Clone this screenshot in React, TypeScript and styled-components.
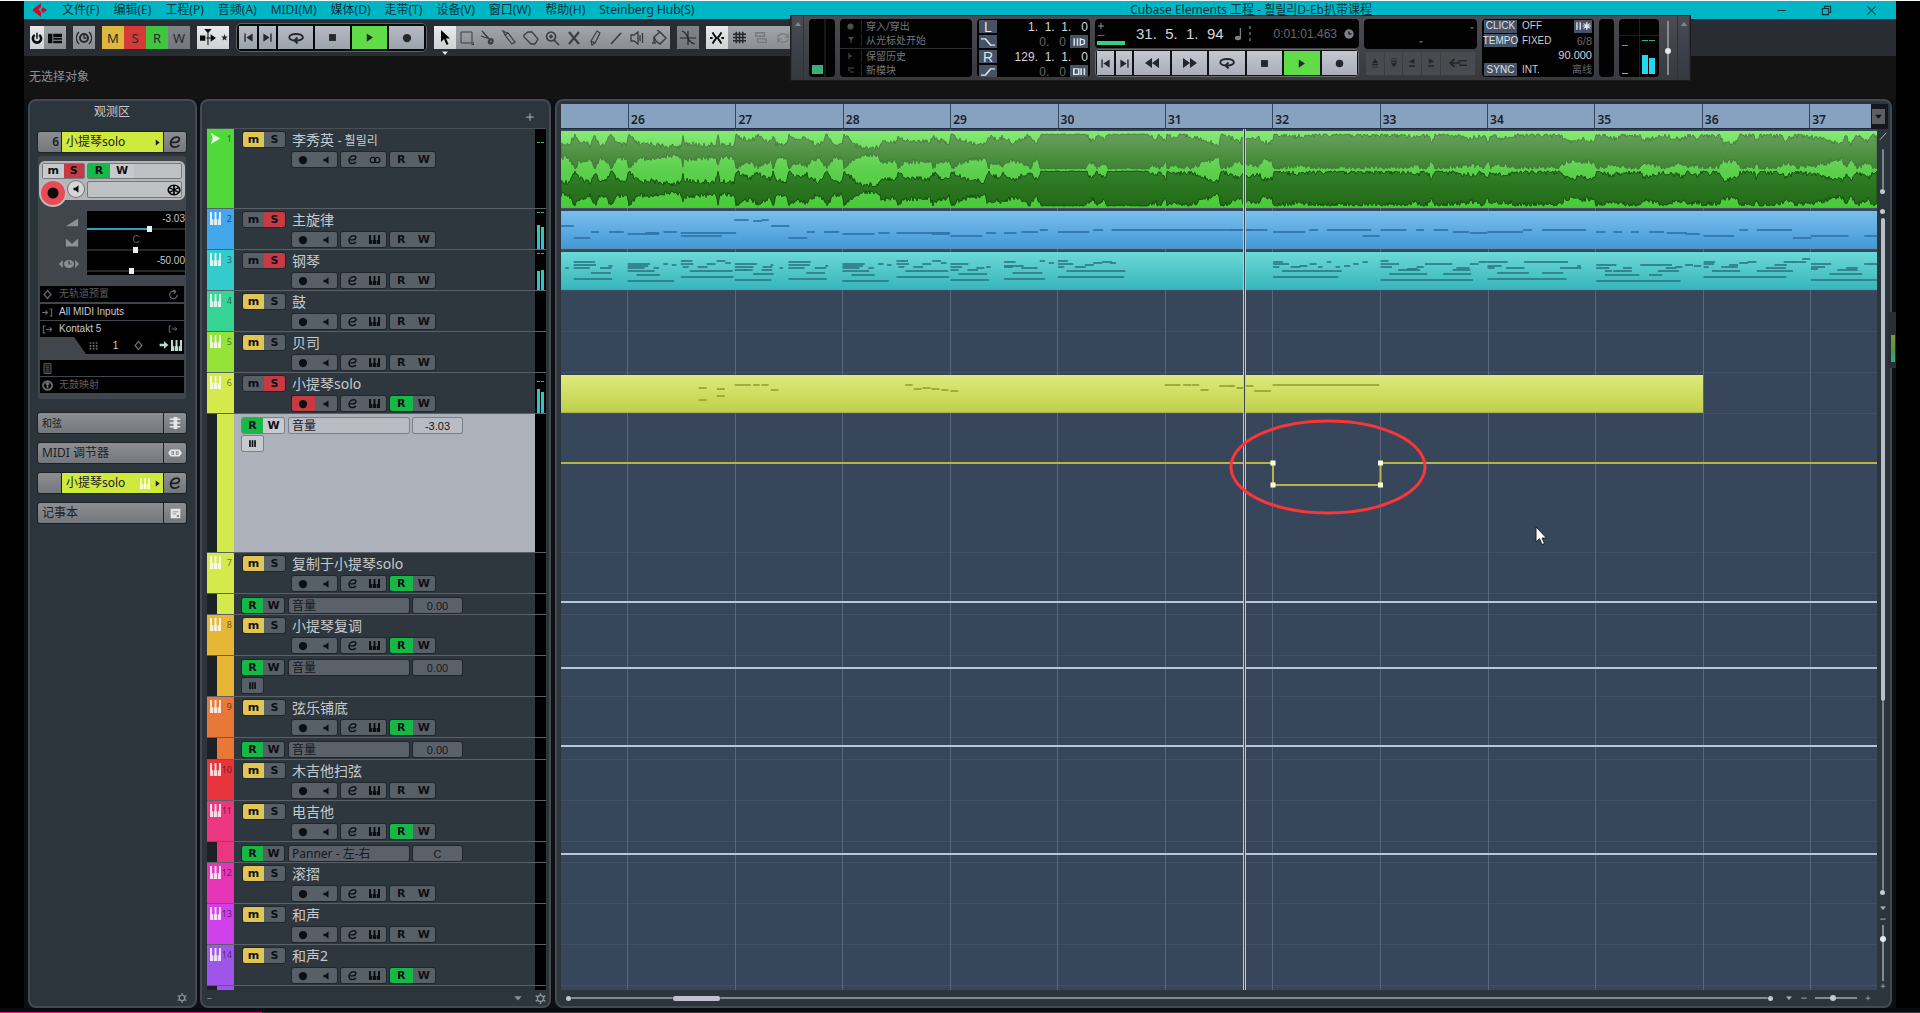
import React from "react";
import styled, { createGlobalStyle, css } from "styled-components";

const uiFont = `"Noto Sans", "Noto Sans CJK SC", "Noto Sans CJK KR", sans-serif`;
const smallFont = `"Liberation Sans", "Noto Sans CJK SC", sans-serif`;
const capFont = `"DejaVu Sans", sans-serif`;

const Global = createGlobalStyle`
  * { box-sizing: border-box; }
  body { margin: 0; background: #000; font-family: ${uiFont}; overflow: hidden; }
  button, input { font: inherit; margin: 0; padding: 0; border: 0; color: inherit; background: none; }
  svg { display: block; flex: none; }
`;

/* ---------- icons ---------- */

const paths: Record<string, React.ReactNode> = {
  power: <><path d="M5 4a5.500 5.500 0 1 0 6 0" fill="none" stroke="currentColor" strokeWidth="3.500" /><path d="M8 1v8" stroke="currentColor" strokeWidth="2" /></>,
  layout: <path d="M0 3h5v11H0zM6 3h10v4H6zM6 8h10v2H6zM6 11h10v3H6z" />,
  constrain: <><circle cx="8" cy="8" r="4" fill="none" stroke="currentColor" strokeWidth="2" /><path d="M8 5v3h2.500M3 2a8 8 0 0 0 0 12M13 2a8 8 0 0 1 0 12" fill="none" stroke="currentColor" strokeWidth="1.300" /></>,
  follow: <path d="M0 6h5v5H0zM6 8h4V5l5 3.500-5 3.500V9H6zM4 0h7L7.500 4zM7 3h1v12H7z" />,
  star: <path d="M8 3l1.300 3.400 3.700.2-2.900 2.300 1 3.600L8 10.500l-3.100 2 1-3.600L3 6.600l3.700-.2z" />,
  prev: <path d="M2 2h2v12H2zM14 2v12L5 8z" />,
  next: <path d="M12 2h2v12h-2zM2 2v12l9-6z" />,
  rew: <path d="M8 3v10L1 8zM15 3v10L8 8z" />,
  fwd: <path d="M1 3v10l7-5zM8 3v10l7-5z" />,
  cycle: <path d="M6 10.500C-1 9.500 0 4 8 4s9.500 5.500 2 6.500H7M9.500 7.500L6.500 10.500l3 3" fill="none" stroke="currentColor" strokeWidth="1.800" />,
  stop: <path d="M3 3h10v10H3z" />,
  play: <path d="M4 2v12l9-6z" />,
  rec: <circle cx="8" cy="8" r="5.500" />,
  pointer: <path d="M4 0v12l3-3 2.500 6 2-1-2.500-5.500h4z" />,
  range: <><path d="M2 2h11v11H2z" fill="none" stroke="currentColor" strokeWidth="1" /><path d="M15 12v3h-3z" /></>,
  split: <path d="M2 1l8 9M1 6l9 3M10 9a2 2 0 1 0 3 1 2 2 0 0 0-3-1M10 10a2 2 0 1 0 1 4 2 2 0 0 0-1-4" fill="none" stroke="currentColor" strokeWidth="1.300" />,
  glue: <path d="M2 1l2 4 7 9 3-2-7-9-3-1zM4 5l3-2" fill="none" stroke="currentColor" strokeWidth="1.200" />,
  erase: <path d="M1 5l4-3h4l6 7-3 5H8L1 7z" fill="none" stroke="currentColor" strokeWidth="1.300" />,
  zoom: <path d="M7 2a4.500 4.500 0 1 0 .1 0M10 10l5 5M7 4.500v4M5 6.500h4" fill="none" stroke="currentColor" strokeWidth="1.600" />,
  mute: <path d="M3 2l10 12M13 2L3 14" fill="none" stroke="currentColor" strokeWidth="2" />,
  pencil: <path d="M5 15l-1-4 6-10 3 2-5 10zM4 11l4 2" fill="none" stroke="currentColor" strokeWidth="1.200" />,
  line: <path d="M3 14L13 3" fill="none" stroke="currentColor" strokeWidth="1.600" />,
  speaker: <path d="M1 5h3l4-3v12l-4-3H1zM10 5v6M12.500 3v10" fill="none" stroke="currentColor" strokeWidth="1.300" />,
  bucket: <path d="M3 7l6-5 6 6-6 6-4-3zM3 7v6M9 2L6 0M1 13h4" fill="none" stroke="currentColor" strokeWidth="1.500" />,
  xfade: <path d="M8 1v14M0 8h16M2 1c3 1 5 4 6 7s3 5 7 6" fill="none" stroke="currentColor" strokeWidth="1.200" />,
  snap: <path d="M3 1.500C5 6 7 7 7 8s-2 2-4 6.500M13 1.500C11 6 9 7 9 8s2 2 4 6.500M0 8h3M13 8h3" fill="none" stroke="currentColor" strokeWidth="2.200" />,
  grid: <path d="M4 1v14M8 1v14M12 1v14M0 4h16M0 8h16M0 12h16" fill="none" stroke="currentColor" strokeWidth="1.800" />,
  gridtype: <path d="M2 2h10v4H2zM4 9h10v4H4z" fill="none" stroke="currentColor" strokeWidth="1.500" />,
  quant: <path d="M2 7c1-5 10-5 12 0M14 9c-1 5-10 5-12 0M14 3v4h-4M2 13V9h4" fill="none" stroke="currentColor" strokeWidth="1.500" />,
  mon: <path d="M4 6h3l5-4v12L7 10H4z" />,
  edit: <path d="M2 8.500h6c5.500 0 7-6 2-6C5.500 2.500 3 6 3 9.500c0 5.500 6.500 5.500 10 2" fill="none" stroke="currentColor" strokeWidth="2" />,
  stereo: <path d="M5 4.500a3.500 3.500 0 1 0 .1 0M11 4.500a3.500 3.500 0 1 0 .1 0" fill="none" stroke="currentColor" strokeWidth="1.600" />,
  keys: <path d="M0 0h3v9h1.600v7H0zM6.600 0h2.800v9h1v7H5.600V9h1zM13 0h3v16h-4.600V9H13z" />,
  audio: <path d="M1 1l14 7L1 15l3-7z" />,
  bars: <path d="M2 2h3v12H2zM6.500 2h3v12h-3zM11 2h3v12h-3z" />,
  gear: <path d="M8 3.500a4.500 4.500 0 1 0 .1 0M8 0v3M8 13v3M1 4l2.600 1.500M12.400 10.500L15 12M1 12l2.600-1.500M12.400 5.500L15 4" fill="none" stroke="currentColor" strokeWidth="2.200" />,
  wheel: <path d="M8 1.500a6.500 6.500 0 1 0 .1 0M8 2v12M3 5l10 6M3 11l10-6" fill="none" stroke="currentColor" strokeWidth="1.900" />,
  plus: <path d="M7 2h2v5h5v2H9v5H7V9H2V7h5z" />,
  minus: <path d="M1 7h14v2.500H1z" />,
  down: <path d="M2 5h12l-6 7z" />,
  up: <path d="M2 12h12L8 4z" />,
  right: <path d="M4 1v14l9-7z" />,
  volume: <path d="M1 14L15 5v9z" />,
  pan: <path d="M1 4l7 6 7-6v9H1z" />,
  delay: <><circle cx="8" cy="8" r="4" /><path d="M3 4v8L0 8zM13 4v8l3-4z" /><path d="M8 5v3h2" fill="none" stroke="#3f454b" /></>,
  diamond: <path d="M8 2l5 6-5 6-5-6z" fill="none" stroke="currentColor" strokeWidth="1.800" />,
  reload: <path d="M10 3.500a5.500 5.500 0 1 0 3.500 5M8 1l3 2.500L8.500 7" fill="none" stroke="currentColor" strokeWidth="1.600" />,
  input: <path d="M0 8h8M5 5l3 3-3 3M11 3h3v10h-3" fill="none" stroke="currentColor" strokeWidth="1.500" />,
  output: <path d="M5 3H2v10h3M6 8h8M11 5l3 3-3 3" fill="none" stroke="currentColor" strokeWidth="1.500" />,
  dots: <path d="M1 2h3v3H1zM6.500 2h3v3h-3zM12 2h3v3h-3zM1 7h3v3H1zM6.500 7h3v3h-3zM12 7h3v3h-3zM1 12h3v3H1zM6.500 12h3v3h-3zM12 12h3v3h-3z" />,
  arrow: <path d="M1 6h7V2l7 6-7 6v-4H1z" />,
  sheet: <path d="M3 1h10v14H3zM5 4h6M5 7h6M5 10h6M5 13h6" fill="none" stroke="currentColor" strokeWidth="1.300" />,
  drum: <path d="M8 1.500a6.500 6.500 0 1 0 .1 0M8 4v8M5.500 6.500L8 4l2.500 2.500" fill="none" stroke="currentColor" strokeWidth="2.500" />,
  chord: <path d="M6 0h5v16H6zM1 2h14v2H1zM1 7h14v2H1zM1 12h14v2H1z" />,
  midi: <path d="M0 8l3-4h10l3 4-3 4H3zM4 6v4h3V6zM9 6v4h3V6zM5 7h1v2H5zM10 7h1v2h-1z" fillRule="evenodd" />,
  note: <path d="M1 1h14v14H1zM4 5v1h8V5zM4 8v1h5V8zM10 11v2h3v-3h-2z" fillRule="evenodd" />,
  tee: <path d="M2 2h12L9 8v6H7V8z" />,
  flag: <path d="M3 2h2v4l7 2-7 2v4H3z" />,
  lanes: <path d="M2 3h12v2H2zM2 7h5v2H2zM6 11h8v2H6z" />,
  curveDown: <path d="M0 3h5l6 10h5" fill="none" stroke="currentColor" strokeWidth="2" />,
  curveUp: <path d="M0 13h5l6-10h5" fill="none" stroke="currentColor" strokeWidth="2" />,
  preroll: <path d="M1.500 2v12M5.500 2v12M9 3l5 2v6l-5 2z" fill="none" stroke="currentColor" strokeWidth="1.800" />,
  postroll: <path d="M1 3h6v10H1zM10 2v12M14 2v12" fill="none" stroke="currentColor" strokeWidth="2" />,
  quarter: <><path d="M10 1h1.500v11H10z" /><ellipse cx="8" cy="12.500" rx="3.500" ry="2.500" /></>,
  swing: <path d="M7 0h2v3H7zM7 6h2v3H7zM7 12h2v3H7z" />,
  clock: <><circle cx="8" cy="8" r="7.500" /><path d="M8 4v4h4" fill="none" stroke="#000" strokeWidth="1.800" /></>,
  ins: <path d="M8 2l4 6H4zM4 9h8v2H4zM4 13h8v1H4z" />,
  del: <path d="M8 14l4-6H4zM4 5h8v2H4zM4 2h8v1H4z" />,
  nudgeL: <path d="M11 2v7L4 6zM4 11h8v2H4z" />,
  nudgeR: <path d="M5 2v7l7-3zM4 11h8v2H4z" />,
  loopback: <path d="M5 3L1 8l4 5M1 8h9M8 5h8M9 11h7" fill="none" stroke="currentColor" strokeWidth="1.800" />,
  metro: <path d="M1 2v12M4.500 2v12M11.500 2v12M7 8h9M8 4l7 8M15 4l-7 8" fill="none" stroke="currentColor" strokeWidth="1.500" />,
  winMin: <path d="M2 8h12" stroke="currentColor" strokeWidth="1.500" />,
  winMax: <path d="M2 5h9v9H2zM5 5V2h9v9h-3" fill="none" stroke="currentColor" strokeWidth="1.500" />,
  winClose: <path d="M2 2l12 12M14 2L2 14" stroke="currentColor" strokeWidth="1.500" />,
  logo: <path d="M1 7l8-6v4L7 7v1l2 2v5L1 9zM11 5l4 3-4 3-2-3z" />,
};

const Icon = ({ name, size = 12, w }: { name: string; size?: number; w?: number }) => (
  <svg width={w ?? size} height={size} viewBox="0 0 16 16" fill="currentColor" preserveAspectRatio={w ? "none" : "xMidYMid meet"} aria-hidden>
    {paths[name]}
  </svg>
);

/* ---------- frame ---------- */

const Page = styled.div`
  min-height: 100vh;
  display: flex;
  flex-direction: column;
  background: #000;
  border-top: 1px solid #f4fbfc;
`;
const Frame = styled.div`
  flex: 1;
  margin: 0 24px;
  position: relative;
  display: flex;
  flex-direction: column;
  background: #0c0f14;
`;
const MenuBar = styled.header`
  height: 18px;
  display: flex;
  align-items: center;
  background: #00b6c4;
  color: #07343c;
  font-size: 12px;
  line-height: 16px;
`;
const Logo = styled.span`
  color: #c8102e;
  padding: 0 7px 0 8px;
`;
const Menu = styled.nav`
  display: flex;
  flex: 1;
`;
const MenuItem = styled.button`
  padding: 0 7px;
  white-space: nowrap;
`;
const WinTitle = styled.div`
  white-space: nowrap;
`;
const WinButtons = styled.div`
  flex: 1;
  max-width: 524px;
  display: flex;
  justify-content: flex-end;
  gap: 34px;
  padding-right: 19px;
`;

/* ---------- toolbar ---------- */

const Toolbar = styled.div`
  height: 37px;
  display: flex;
  align-items: center;
  gap: 7px;
  padding: 0 6px;
  background: #2a2c33;
`;
const Group = styled.div<{ $framed?: boolean }>`
  display: flex;
  height: 23px;
  flex: none;
  ${(p) => p.$framed && css`
    height: 29px;
    gap: 2px;
    padding: 2px;
    border: 1px solid #5e6166;
    border-radius: 5px;
    background: #07080a;
  `}
`;
const tones: Record<string, string> = {
  plain: "linear-gradient(#a2a5aa, #8a8d92)",
  light: "linear-gradient(#e8eaec, #cfd1d4)",
  dark: "linear-gradient(#808388, #74777c)",
  steel: "linear-gradient(#b5bac4, #9da3ad)",
  pale: "linear-gradient(#c3c7d0, #a9aeb8)",
  go: "#5fdc48",
  yellow: "#dcb93c",
  red: "#d63a38",
  green: "#3fc63c",
  off: "#4a4b50",
};
const ToolButton = styled.button<{ $w?: number; $tone?: string; $ink?: string }>`
  width: ${(p) => p.$w ?? 22}px;
  height: 100%;
  display: flex;
  align-items: center;
  justify-content: center;
  background: ${(p) => tones[p.$tone ?? "plain"]};
  color: ${(p) => p.$ink ?? "#26282c"};
  font-size: 13px;
`;
const Tools = styled.div`
  display: grid;
  grid-template-columns: 22px repeat(10, minmax(0, 1fr));
  width: 236px;
  height: 23px;
  position: relative;
  & > button { width: auto; }
`;
const ToolHint = styled.span`
  position: absolute;
  left: 7px;
  top: 23px;
  color: #e6e8ea;
`;
const StatusLine = styled.div`
  height: 43px;
  display: flex;
  align-items: center;
  padding: 0 5px 4px;
  background: #131313;
  color: #8c8f93;
  font-size: 12px;
`;

/* ---------- transport ---------- */

const Transport = styled.section`
  position: absolute;
  left: 766px;
  top: 14px;
  height: 66px;
  display: flex;
  gap: 5px;
  padding: 3px 0;
  background: linear-gradient(#4a4c51, #37393d);
  border: 1px solid #1c1d20;
  color: #c9cbcf;
`;
const Grip = styled.div`
  width: 13px;
  color: #85888e;
  display: flex;
  justify-content: center;
  padding-top: 4px;
  background: linear-gradient(#4a4c51, #3b3f4b 60%, #37393d);
  border: 1px solid #303236;
  border-width: 0 1px;
  margin: -3px 0;
`;
const Screen = styled.div<{ $w: number }>`
  width: ${(p) => p.$w}px;
  background: #020203;
  border-radius: 4px;
  overflow: hidden;
  display: flex;
  flex-direction: column;
`;
const LoadMeter = styled(Screen)`
  justify-content: flex-end;
  padding: 3px;
  background: linear-gradient(90deg, #020203 15px, #17181b 15px, #17181b 17px, #020203 17px);
`;
const Load = styled.span`
  width: 11px;
  height: 9px;
  background: #3aae74;
`;
const ModeRow = styled.button<{ $gap?: boolean }>`
  flex: 1;
  display: grid;
  grid-template-columns: 21px 1fr;
  align-items: center;
  justify-items: center;
  color: #74767a;
  font-size: 10px;
  line-height: 12px;
  border-bottom: ${(p) => (p.$gap ? "1px solid #2b2c2e" : 0)};
  & > svg { color: #4d4f53; }
  & > span { justify-self: stretch; text-align: left; padding-left: 4px; border-left: 1px solid #232427; }
`;
const LocRow = styled.div`
  flex: 1;
  display: flex;
  align-items: center;
  gap: 4px;
  padding: 1px 2px;
  font-family: ${smallFont};
  font-size: 12px;
  line-height: 12px;
`;
const Key = styled.button<{ $w?: number }>`
  width: ${(p) => p.$w ?? 18}px;
  height: 13px;
  display: flex;
  align-items: center;
  justify-content: center;
  background: #465266;
  color: #dfe3ea;
  font-family: ${smallFont};
  font-size: ${(p) => (p.$w ? 10 : 14)}px;
  line-height: 12px;
`;
const Digits = styled.span<{ $dim?: boolean; $size?: number }>`
  white-space: pre;
  color: ${(p) => (p.$dim ? "#66686c" : "#d4d5d8")};
  font-family: ${smallFont};
  font-size: ${(p) => p.$size ?? 12}px;
`;
const Push = styled.span`
  flex: 1;
`;
const Stack = styled.div<{ $w: number }>`
  width: ${(p) => p.$w}px;
  display: flex;
  flex-direction: column;
  gap: 1px;
`;
const TimeScreen = styled(Screen)`
  height: 30px;
  width: 100%;
  flex-direction: row;
  align-items: center;
  padding: 0 5px 0 2px;
  gap: 7px;
`;
const Jog = styled.div`
  width: 28px;
  margin-right: 4px;
  display: flex;
  flex-direction: column;
  gap: 3px;
  color: #8d9095;
`;
const JogBar = styled.span`
  height: 4px;
  background: #35cf8b;
`;
const NoteMarks = styled.span`
  display: flex;
  align-items: center;
  color: #7d8084;
`;
const Deck = styled.div<{ $quiet?: boolean }>`
  height: 28px;
  display: flex;
  gap: ${(p) => (p.$quiet ? 1 : 2)}px;
  padding: 1px;
  border-radius: 4px;
  border: 1px solid ${(p) => (p.$quiet ? "transparent" : "#6a6c70")};
  background: ${(p) => (p.$quiet ? "transparent" : "#111214")};
`;
const DeckButton = styled.button<{ $grow: number; $tone: string }>`
  flex: ${(p) => p.$grow} 1 0;
  display: flex;
  align-items: center;
  justify-content: center;
  background: ${(p) => tones[p.$tone]};
  color: ${(p) => (p.$tone === "off" ? "#25262a" : "#23272d")};
`;
const MarkerScreen = styled(Screen)`
  width: 100%;
  height: 30px;
  align-items: center;
  justify-content: space-between;
  color: #55585c;
  padding: 6px 2px 4px;
`;
const MarkerRow = styled.div`
  width: 100%;
  display: flex;
  justify-content: flex-end;
`;
const TempoRow = styled.div`
  flex: 1;
  display: flex;
  align-items: center;
  gap: 5px;
  padding: 0 2px;
  font-family: ${smallFont};
  font-size: 10px;
  line-height: 12px;
`;
const OutMeter = styled(Screen)`
  flex-direction: row;
  align-items: flex-end;
  gap: 1px;
  padding: 0 4px 3px 3px;
  background:
    linear-gradient(#1c1e20, #1c1e20) 0 16px / 100% 1px no-repeat,
    linear-gradient(90deg, #020203 20px, #1c1e20 20px, #1c1e20 21px, #020203 21px);
`;
const MeterCol = styled.span<{ $w: number; $top: number }>`
  width: ${(p) => p.$w}px;
  height: 100%;
  padding-top: ${(p) => p.$top}px;
  display: flex;
  flex-direction: column;
  justify-content: space-between;
`;
const Peak = styled.i<{ $warm?: boolean }>`
  height: 1px;
  background: ${(p) => (p.$warm ? "#b5792c" : "#36b87c")};
`;
const Level = styled.i<{ $h: number; $bright?: boolean }>`
  height: ${(p) => p.$h}px;
  background: ${(p) => (p.$bright ? "#1fd8ee" : "linear-gradient(#2ad0ac, #22c4dc)")};
`;
const VRange = styled.input.attrs({ type: "range" })<{ $h: number }>`
  writing-mode: vertical-lr;
  appearance: none;
  width: 8px;
  height: ${(p) => p.$h}px;
  align-self: center;
  background: linear-gradient(90deg, transparent 3px, #868b93 3px, #868b93 5px, transparent 5px);
  &::-webkit-slider-thumb {
    appearance: none;
    width: 6px;
    height: 6px;
    border-radius: 50%;
    background: #e6e9ee;
  }
`;

/* ---------- panels ---------- */

const Work = styled.main`
  flex: 1;
  display: flex;
  align-items: stretch;
  padding: 0 4px;
`;
const Panel = styled.section`
  display: flex;
  flex-direction: column;
  border: 2px solid #434a52;
  border-radius: 8px;
  background: #2d353c;
`;
const Inspector = styled(Panel)`
  width: 169px;
  margin-right: 3px;
  padding: 0 8px 0 7px;
`;
const PanelTitle = styled.h2`
  margin: 0;
  height: 30px;
  padding-top: 3px;
  text-align: center;
  font-size: 12px;
  line-height: 16px;
  font-weight: 400;
  color: #c3c7cb;
`;
const Section = styled.div<{ $gap?: number }>`
  height: 22px;
  margin-bottom: ${(p) => p.$gap ?? 8}px;
  display: flex;
  gap: 1px;
  flex: none;
  border: 1px solid #1d2227;
  border-radius: 3px;
  overflow: hidden;
  background: #1d2227;
  color: #1c2024;
  font-size: 12px;
  line-height: 16px;
`;
const SectionPart = styled.button<{ $w?: number; $lime?: boolean; $size?: number; $light?: boolean; $end?: boolean }>`
  ${(p) => (p.$w ? `width: ${p.$w}px;` : "flex: 1;")}
  display: flex;
  align-items: center;
  justify-content: ${(p) => (p.$end ? "flex-end" : p.$w ? "center" : "flex-start")};
  gap: 4px;
  padding: ${(p) => (p.$end ? "0 2px" : p.$w ? "0" : "0 2px 0 4px")};
  font-size: ${(p) => p.$size ?? 12}px;
  font-weight: ${(p) => (p.$end ? 600 : 400)};
  background: ${(p) => (p.$lime ? "#cfe93d" : "linear-gradient(#8b8f94, #74787d)")};
  color: ${(p) => (p.$light ? "#e4e6e8" : "#1c2024")};
`;
const Lime = styled.span`
  display: flex;
  color: #f6ffd0;
`;
const Card = styled.div`
  margin: 3px 1px 13px;
  padding: 5px 1px 5px;
  border-radius: 3px;
  background: #40464b;
  display: flex;
  flex-direction: column;
`;
const Controls = styled.div`
  height: 39px;
  margin-bottom: 11px;
  padding: 2px 3px;
  border-radius: 6px 6px 6px 12px;
  background: #b4b7ba;
  display: grid;
  grid-template-columns: 43px 1fr;
  grid-template-rows: 16px 17px;
  gap: 2px;
`;
const ControlBox = styled.div`
  display: flex;
  border: 1px solid #75797d;
  border-radius: 2px;
  background: #bfc2c5;
  align-items: center;
`;
const Rounds = styled.div`
  display: flex;
  gap: 3px;
  align-items: flex-start;
  margin-left: -1px;
`;
const Round = styled.button<{ $d: number; $red?: boolean }>`
  width: ${(p) => p.$d}px;
  height: ${(p) => p.$d}px;
  flex: none;
  border-radius: 50%;
  display: flex;
  align-items: center;
  justify-content: center;
  color: #0c0c0c;
  background: ${(p) => (p.$red ? "#ea4a53" : "#d3d5d7")};
  box-shadow: 0 0 0 ${(p) => (p.$red ? "2px #b9bcbf" : "1px #6f7377")};
`;
const Cap = styled.button<{ $on?: string; $w?: number; $lit?: boolean }>`
  ${(p) => (p.$w ? `width: ${p.$w}px;` : "flex: 1;")}
  height: 100%;
  display: flex;
  align-items: center;
  justify-content: center;
  font-family: ${capFont};
  font-weight: 700;
  font-size: 11px;
  line-height: 12px;
  color: #0d1013;
  background: ${(p) => (p.$on === "m" ? "#e2c552" : p.$on === "s" ? "#c73a44" : p.$on === "r" ? "#16b848" : p.$lit ? "#c6c9cd" : "#575f67")};
`;
const Faders = styled.div`
  display: grid;
  grid-template-columns: 48px 1fr;
  height: 64px;
  margin-bottom: 11px;
`;
const FaderIcons = styled.div`
  display: flex;
  flex-direction: column;
  justify-content: space-around;
  align-items: flex-end;
  padding-right: 8px;
  color: #8d9194;
`;
const FaderScreen = styled.div`
  background: #000;
  display: flex;
  flex-direction: column;
`;
const Fader = styled.label<{ $mid?: boolean }>`
  height: 21px;
  display: flex;
  flex-direction: column;
  justify-content: flex-end;
  text-align: ${(p) => (p.$mid ? "center" : "right")};
  color: ${(p) => (p.$mid ? "#5f6367" : "#c5c8ca")};
  font-family: ${smallFont};
  font-size: 10px;
  line-height: 14px;
`;
const HRange = styled.input.attrs({ type: "range" })<{ $fill?: number; $round?: boolean }>`
  appearance: none;
  width: 100%;
  height: 6px;
  display: block;
  background: linear-gradient(90deg, #2f9cc4 ${(p) => p.$fill ?? 0}%, ${(p) => (p.$round ? "#818a95" : "#26282a")} 0) center / 100% 2px no-repeat;
  &::-webkit-slider-thumb {
    appearance: none;
    width: ${(p) => (p.$round ? 6 : 5)}px;
    height: 6px;
    border-radius: ${(p) => (p.$round ? "50%" : 0)};
    background: ${(p) => (p.$round ? "#c3c9d1" : "#eceeef")};
  }
`;
const Slot = styled.button<{ $dim?: boolean; $gap?: number }>`
  height: 16px;
  margin: 0 1px ${(p) => p.$gap ?? 1}px;
  display: grid;
  grid-template-columns: 16px 1fr 14px;
  align-items: center;
  text-align: left;
  padding: 0 2px;
  background: #000;
  color: ${(p) => (p.$dim ? "#5b5e61" : "#c9cbcd")};
  font-family: ${smallFont};
  font-size: 10px;
  line-height: 14px;
  & > svg { color: #6c7073; }
  & > span { padding-left: 1px; }
`;
const Channel = styled.div`
  height: 17px;
  margin: 0 1px 6px 35px;
  padding: 0 2px 0 15px;
  display: flex;
  align-items: center;
  justify-content: space-between;
  background: #000;
  clip-path: polygon(0 0, 100% 0, 100% 100%, 12px 100%);
  font-family: ${smallFont};
  font-size: 10px;
  color: #6c7073;
`;
const ChannelOut = styled.span`
  display: flex;
  gap: 2px;
  color: #b9dcd4;
`;
const PanelFoot = styled.footer`
  height: 16px;
  margin-top: auto;
  display: flex;
  align-items: center;
  justify-content: flex-end;
  gap: 12px;
  color: #8a9098;
`;

/* ---------- track list ---------- */

const TrackPanel = styled(Panel)`
  width: 351px;
  margin-right: 4px;
  padding: 0 3px 0 5px;
`;
const TrackHead = styled.div`
  height: 28px;
  display: flex;
  justify-content: flex-end;
  align-items: center;
  padding: 5px 11px 0 0;
  color: #9a9fa4;
  border-bottom: 1px solid #4a5056;
`;
const Row = styled.div<{ $h: number }>`
  height: ${(p) => p.$h}px;
  flex: none;
  display: grid;
  grid-template-columns: 27px 1fr 11px;
  overflow: hidden;
  border-bottom: 1px solid #596067;
`;
const Strip = styled.div<{ $c: string; $sub?: boolean }>`
  display: flex;
  justify-content: space-between;
  padding: 3px 2px 0 3px;
  background: ${(p) => p.$c};
  border-left: ${(p) => (p.$sub ? "10px solid #1c2126" : 0)};
  font-size: 9px;
  line-height: 14px;
  color: rgba(0, 0, 0, 0.55);
  & > svg { color: rgba(255, 255, 255, 0.82); }
`;
const Body = styled.div<{ $selected?: boolean; $sub?: boolean }>`
  display: grid;
  grid-template-columns: 42px 1fr;
  grid-template-rows: 15px 15px;
  row-gap: ${(p) => (p.$sub ? 3 : 5)}px;
  column-gap: ${(p) => (p.$sub ? 5 : 7)}px;
  padding: ${(p) => (p.$sub ? "4px 0 0 8px" : "3px 0 0 9px")};
  background: ${(p) => (p.$selected ? "#adb1b9" : "#2f373e")};
`;
const Pair = styled.div<{ $w?: number; $lit?: boolean }>`
  width: ${(p) => p.$w ?? 42}px;
  height: 15px;
  display: flex;
  border-radius: 2px;
  overflow: hidden;
  box-shadow: 0 0 0 1px ${(p) => (p.$lit ? "#7d8187" : "#20262b")};
`;
const TrackName = styled.div`
  color: #c6cacd;
  font-size: 14px;
  line-height: 15px;
  white-space: nowrap;
`;
const KrName = styled.span`
  font-size: 12px;
`;
const Sets = styled.div`
  grid-column: 2;
  display: flex;
  gap: 4px;
`;
const ParamLine = styled.div`
  display: flex;
  gap: 4px;
`;
const Param = styled.button<{ $lit?: boolean }>`
  width: 120px;
  height: 15px;
  padding-left: 3px;
  text-align: left;
  border-radius: 2px;
  font-size: 12px;
  line-height: 13px;
  color: #15191d;
  background: ${(p) => (p.$lit ? "#b9bcc3" : "#5a6169")};
  box-shadow: 0 0 0 1px ${(p) => (p.$lit ? "#7d8187" : "#20262b")};
`;
const Value = styled.input<{ $lit?: boolean }>`
  width: 49px;
  height: 15px;
  text-align: center;
  border-radius: 2px;
  font-family: ${smallFont};
  font-size: 11px;
  color: #15191d;
  background: ${(p) => (p.$lit ? "#b9bcc3" : "#5a6169")};
  box-shadow: 0 0 0 1px ${(p) => (p.$lit ? "#7d8187" : "#20262b")};
`;
const RowMeter = styled.div`
  background: #000;
  display: flex;
  justify-content: center;
  gap: 1px;
`;
const NextRow = styled.div`
  height: 4px;
  display: grid;
  grid-template-columns: 10px 17px 1fr 11px;
`;
const Swatch = styled.span<{ $c: string }>`
  background: ${(p) => p.$c};
`;
const FootMark = styled.span`
  margin-right: auto;
`;

/* ---------- arrange ---------- */

const Arrange = styled(Panel)`
  flex: 1;
  min-width: 0;
  padding: 3px 2px 0 4px;
`;
const RulerRow = styled.div`
  height: 25px;
  display: flex;
`;
const Ruler = styled.div`
  flex: 1;
  display: flex;
  background: #87a2bf;
  border-bottom: 1px solid #1c2a3a;
`;
const Bar = styled.div<{ $span: number }>`
  flex: ${(p) => p.$span} 1 0;
  min-width: 0;
  padding: 9px 0 0 2px;
  font-size: 12px;
  line-height: 14px;
  font-weight: 600;
  color: #18222e;
  & + & { border-left: 1px solid #33475e; }
`;
const RulerMenu = styled.div`
  width: 17px;
  padding: 5px 2px 4px 1px;
  background: #14181d;
`;
const RulerMenuButton = styled.button`
  width: 13px;
  height: 15px;
  display: flex;
  align-items: center;
  justify-content: center;
  background: #5c5f64;
  color: #101214;
`;
const Field = styled.div`
  flex: 1;
  display: flex;
`;
const Canvas = styled.div`
  flex: 1;
  min-width: 0;
  position: relative;
  display: flex;
  flex-direction: column;
  background: #37465b;
  overflow: hidden;
`;
const GridLines = styled.div`
  position: absolute;
  inset: 0;
  display: flex;
`;
const GridCell = styled.div<{ $span: number }>`
  flex: ${(p) => p.$span} 1 0;
  & + & { border-left: 1px solid rgba(130, 150, 175, 0.42); }
`;
const Lane = styled.div<{ $h: number }>`
  position: relative;
  height: ${(p) => p.$h}px;
  flex: none;
  padding-top: 2px;
  border-bottom: 1px solid rgba(130, 150, 175, 0.14);
`;
const clipTones: Record<string, string> = {
  audio: "linear-gradient(#86ea74, #5dd04e 50%, #49cb38)",
  blue: "linear-gradient(#78bfec, #4499d6)",
  teal: "linear-gradient(#6cd8d8, #38b6ba)",
  lime: "linear-gradient(#dfea7c, #bfd04a)",
};
const Clip = styled.div<{ $tone: string; $part?: number }>`
  width: ${(p) => p.$part ?? 100}%;
  height: 100%;
  background: ${(p) => clipTones[p.$tone]};
  border-bottom: 1px solid rgba(0, 0, 0, 0.25);
  overflow: hidden;
`;
const FlatLine = styled.div<{ $top: number }>`
  height: 2px;
  margin-top: ${(p) => p.$top}px;
  background: #b9c8d8;
`;
const Playhead = styled.div`
  position: absolute;
  top: 0;
  bottom: 0;
  left: 682px;
  width: 3px;
  border: 1px solid #c3c7cb;
  border-width: 0 1px;
  background: #3f464e;
`;
const OverlayMark = styled.svg`
  position: absolute;
  left: 667px;
  top: 288px;
`;
const MouseArrow = styled.svg`
  position: absolute;
  left: 974px;
  top: 397px;
`;
const VBar = styled.div`
  width: 11px;
  display: flex;
  flex-direction: column;
  align-items: center;
  color: #a9b1bb;
  padding: 2px 0 1px;
`;
const Gap = styled.span<{ $h: number }>`
  flex: none;
  height: ${(p) => p.$h}px;
`;
const Track = styled.span<{ $grow: number; $thick?: boolean }>`
  flex: ${(p) => p.$grow} 1 0;
  width: ${(p) => (p.$thick ? 4 : 2)}px;
  border-radius: 2px;
  background: ${(p) => (p.$thick ? "#b9c0c9" : "#7b838d")};
`;
const HTrack = styled.span<{ $grow: number; $thick?: boolean }>`
  flex: ${(p) => p.$grow} 1 0;
  height: ${(p) => (p.$thick ? 5 : 2)}px;
  border-radius: 2px;
  background: ${(p) => (p.$thick ? "#c2c1cf" : "#818a95")};
`;
const Knob = styled.i`
  width: 5px;
  height: 5px;
  flex: none;
  border-radius: 50%;
  background: #c3c9d1;
`;
const HBar = styled.div`
  height: 16px;
  display: flex;
  align-items: center;
  padding: 0 17px 0 5px;
  color: #a9b1bb;
`;
const HZoom = styled.div`
  display: flex;
  align-items: center;
  gap: 8px;
  margin-left: 12px;
  width: 86px;
  & > input { flex: 1; min-width: 0; }
`;
const SideTab = styled.div`
  position: absolute;
  right: 0;
  top: 311px;
  width: 8px;
  height: 56px;
  padding: 23px 1px 6px 3px;
  border-radius: 3px 0 0 3px;
  background: #2a2f36;
`;
const SideLevel = styled.div`
  height: 100%;
  background: linear-gradient(#8b9434, #4a9a4a 60%, #2fa98b);
`;
const Progress = styled.div`
  height: 5px;
  border-bottom: 1px solid #3a3d42;
  background: #0a0c12;
`;
const ProgressDone = styled.div`
  height: 1px;
  width: 262px;
  margin-top: -1px;
  position: relative;
  background: #f0148c;
`;

/* ---------- data ---------- */

type TrackData = { n: number; name: React.ReactNode; color: string; h?: number; mute?: boolean; solo?: boolean; rec?: boolean; read?: boolean; levels?: number[]; peak?: number; clip?: string;
  auto?: { h: number; param: string; value: string; selected?: boolean; more?: boolean; line?: number } };

const tracks: TrackData[] = [
  { n: 1, name: <>李秀英 <KrName>- 훨릴리</KrName></>, color: "#4fd93b", h: 80, mute: true, levels: [0, 0], peak: 13, clip: "audio" },
  { n: 2, name: "主旋律", color: "#41a6ea", solo: true, levels: [24, 22], peak: 3, clip: "blue" },
  { n: 3, name: "钢琴", color: "#33cbcb", solo: true, levels: [19, 20], peak: 3, clip: "teal" },
  { n: 4, name: "鼓", color: "#36d595", mute: true },
  { n: 5, name: "贝司", color: "#94e336", mute: true },
  { n: 6, name: "小提琴solo", color: "#d4ea4c", solo: true, rec: true, read: true, levels: [24, 21], peak: 8, clip: "lime", auto: { h: 139, param: "音量", value: "-3.03", selected: true, more: true } },
  { n: 7, name: "复制于小提琴solo", color: "#d4ea4c", mute: true, read: true, auto: { h: 21, param: "音量", value: "0.00", line: 5 } },
  { n: 8, name: "小提琴复调", color: "#e6b637", mute: true, read: true, auto: { h: 41, param: "音量", value: "0.00", more: true, line: 9 } },
  { n: 9, name: "弦乐铺底", color: "#e87837", mute: true, read: true, auto: { h: 22, param: "音量", value: "0.00", line: 5 } },
  { n: 10, name: "木吉他扫弦", color: "#e8343c", mute: true },
  { n: 11, name: "电吉他", color: "#ea3780", mute: true, read: true, auto: { h: 21, param: "Panner - 左-右", value: "C", line: 9 } },
  { n: 12, name: "滚摺", color: "#e634b6", mute: true },
  { n: 13, name: "和声", color: "#cf40ea", mute: true },
  { n: 14, name: "和声2", color: "#a055ea", mute: true, read: true },
];

const bars = [26, 27, 28, 29, 30, 31, 32, 33, 34, 35, 36, 37];

/* Notes are [start, row, length]; each phrase has its own origin and scale. */
type Phrase = { at: number; per: number; notes: number[][] };
const first = (notes: number[][]): Phrase => ({ at: -11, per: 2.24, notes });
const second = (notes: number[][]): Phrase => ({ at: 669, per: 2.272, notes });

const melody = [
  first([[25, 46, 28], [53, 81, 37], [92, 63, 18], [132, 63, 33], [174, 68, 70], [213, 66, 32], [254, 64, 30], [293, 66, 124], [293, 75, 92], [413, 28, 32], [455, 31, 20], [474, 28, 16], [495, 46, 41], [534, 81, 42], [575, 63, 18], [614, 63, 34], [655, 68, 72], [735, 66, 26], [776, 66, 120], [855, 69, 40], [897, 75, 71], [977, 66, 22], [1017, 66, 28], [1056, 63, 37], [1097, 57, 18], [1138, 63, 70], [1217, 57, 22], [1258, 57, 312]]),
  second([[0, 57, 85], [98, 63, 73], [180, 57, 20], [220, 57, 101], [301, 75, 39], [342, 57, 59], [423, 57, 18], [463, 57, 32], [506, 63, 37], [545, 66, 40], [585, 63, 81], [666, 57, 20], [709, 57, 100], [832, 63, 21], [871, 63, 20], [911, 63, 18], [953, 63, 33], [992, 66, 46], [1035, 70, 32], [1076, 75, 69], [1157, 57, 20], [1197, 57, 80], [1279, 81, 42], [1320, 75, 85], [1441, 75, 29]]),
];
const chord = (x: number, low: number, alt = false) =>
  alt
    ? [[x, 28, 26], [x, 37, 28], [x + 4, 46, 14], [x + 38, 46, 22], [x + 58, 37, 20], [x + 80, 28, 20], [x + 100, 32, 12], [x + 20, 58, 96], [x, 76, 118]]
    : [[x, 37, 50], [x, 42, 46], [x, 49, 38], [x + 58, 49, 12], [x, 58, 40], [x + 40, 57, 20], [x + 20, 70, 52], [x, low, 104]];
const piano = [
  first([[34, 49, 8], [53, 30, 48], [53, 40, 50], [53, 49, 36], [112, 49, 26], [131, 41, 9], [92, 64, 44], [53, 82, 86],
    ...chord(174, 88), [254, 37, 10], [273, 40, 10], ...chord(293, 76, true),
    [414, 37, 50], [414, 46, 42], [414, 54, 26], [434, 54, 20], [474, 54, 24], [455, 67, 46], [476, 46, 22], [494, 40, 6], [414, 84, 82], [514, 49, 8],
    [534, 30, 50], [534, 40, 48], [534, 49, 36], [593, 49, 26], [574, 64, 42], [617, 41, 6], [534, 82, 86],
    ...chord(655, 88), [735, 37, 12], [755, 40, 10], ...chord(776, 76, true),
    [897, 37, 40], [897, 46, 26], [897, 54, 18], [935, 54, 24], [955, 49, 18], [915, 67, 64], [897, 84, 86], [977, 46, 10],
    [1017, 31, 26], [1017, 41, 44], [1017, 46, 20], [1056, 49, 36], [1036, 64, 67], [1017, 82, 92], [1097, 28, 12], [1117, 32, 12],
    [1138, 28, 22], [1138, 37, 34], [1138, 46, 14], [1176, 46, 24], [1198, 40, 20], [1217, 34, 20], [1237, 29, 22], [1254, 32, 14], [1157, 58, 132], [1138, 76, 148]]),
  second([[98, 29, 22], [98, 37, 36], [98, 46, 14], [138, 46, 22], [158, 42, 18], [181, 37, 16], [220, 31, 10], [200, 46, 10], [240, 46, 10], [259, 42, 14], [280, 37, 12], [301, 29, 12], [118, 58, 136], [98, 76, 148],
    [342, 26, 18], [342, 37, 42], [342, 46, 26], [402, 50, 24], [424, 46, 16], [382, 55, 50], [443, 37, 62], [362, 67, 86], [342, 84, 210], [506, 55, 40], [514, 49, 30], [484, 67, 64], [545, 37, 20], [565, 31, 20],
    [585, 31, 46], [585, 41, 32], [585, 49, 16], [627, 49, 42], [668, 31, 100], [607, 64, 72], [585, 82, 180], [709, 64, 48], [750, 49, 48], [789, 41, 8],
    [832, 40, 46], [832, 48, 30], [852, 58, 16], [871, 58, 42], [893, 49, 20], [932, 40, 72], [852, 70, 78], [832, 88, 192], [952, 70, 30], [972, 58, 48], [990, 49, 24], [1012, 46, 16], [1034, 39, 18], [1054, 41, 16],
    [1076, 29, 26], [1076, 37, 24], [1076, 46, 12], [1116, 46, 38], [1134, 38, 20], [1157, 32, 20], [1176, 29, 20], [1095, 58, 64], [1076, 76, 188], [1197, 58, 82], [1217, 47, 46], [1237, 40, 28], [1258, 31, 24], [1279, 29, 30], [1300, 20, 18],
    [1320, 37, 46], [1320, 46, 32], [1320, 50, 16], [1380, 55, 46], [1400, 49, 26], [1362, 67, 74], [1320, 84, 150], [1441, 37, 30]]),
];
const violin = [
  first([[333, 38, 18], [333, 76, 18], [374, 41, 18], [374, 64, 18], [414, 29, 36], [455, 31, 15], [474, 29, 16], [495, 46, 17], [796, 29, 17], [815, 41, 18], [835, 38, 18], [855, 41, 18], [877, 46, 16], [897, 49, 18], [1378, 29, 35], [1419, 31, 18], [1438, 29, 17], [1458, 46, 18], [1500, 32, 34], [1540, 38, 20]]),
  second([[0, 32, 12], [16, 38, 14], [36, 32, 18], [56, 49, 38], [98, 29, 242]]),
];

const Notes = ({ phrases, ink, height, width = 1316 }: { phrases: Phrase[]; ink: string; height: number; width?: number }) => (
  <svg width="100%" height={height} viewBox={`0 0 ${width} ${height}`} preserveAspectRatio="none" fill={ink} aria-hidden>
    {phrases.flatMap((p, i) => p.notes.map(([x, y, w], k) => (
      <rect key={`${i}-${k}`} x={x / p.per + p.at} y={Math.round(y / 3 - 1)} width={w / p.per} height={2} opacity={0.85} />
    )))}
  </svg>
);

/* Loudness breakpoints: [time, dip]; dip 0 is full scale, 51 is silence. */
const envA = [25,33,42,33,56,0,65,23,75,26,90,33,101,3,112,33,122,33,138,0,150,28,160,33,172,33,176,0,190,23,205,33,220,28,240,33,260,38,280,38,294,35,297,3,300,28,340,33,370,33,377,3,381,33,412,33,417,0,430,13,450,21,465,3,480,18,495,23,500,0,506,28,530,33,535,0,550,18,575,10,590,28,605,33,620,0,635,33,655,33,658,0,670,13,685,33,700,41,735,41,742,21,775,23,780,3,795,21,850,23,858,5,870,18,894,28,899,0,910,13,930,23,975,33,981,5,1000,18,1017,8,1035,28,1060,13,1075,3,1090,28,1100,0,1200,1,1215,23,1225,5,1240,18,1250,1,1340,0,1355,13,1365,3,1380,23,1382,0,1400,13,1420,1,1440,8,1460,18,1498,33,1502,0,1530,13,1545,23,1553,8];
const envB = [10,8,30,18,50,13,65,8,75,25,95,25,100,1,150,8,200,3,300,3,400,5,420,11,440,3,450,8,458,26,466,3,500,5,550,13,575,3,586,23,592,3,620,13,650,5,700,3,750,5,760,18,780,25,800,14,810,23,828,20,832,1,870,13,900,3,930,3,940,18,960,13,985,3,1030,18,1040,3,1060,13,1076,1,1090,8,1110,3,1120,24,1150,24,1160,3,1190,3,1196,21,1203,3,1250,5,1260,18,1290,3,1310,8,1340,13,1370,23,1390,28,1400,8,1410,28,1425,3,1450,23,1460,5,1475,8];
const points: number[][] = [];
for (let i = 0; i < envA.length; i += 2) points.push([envA[i] / 2.24 - 11, envA[i + 1]]);
for (let i = 0; i < envB.length; i += 2) points.push([envB[i] / 2.272 + 669, envB[i + 1]]);

const noise = (n: number) => {
  const v = Math.sin(n * 12.9898) * 43758.5453;
  return v - Math.floor(v);
};
const dipAt = (x: number) => {
  let i = 0;
  while (i < points.length - 2 && points[i + 1][0] < x) i++;
  const [x0, y0] = points[i];
  const [x1, y1] = points[i + 1];
  const t = Math.min(1, Math.max(0, (x - x0) / (x1 - x0)));
  return y0 + (y1 - y0) * t;
};
const wave = (center: number, seed: number) => {
  const top: string[] = [];
  const bottom: string[] = [];
  for (let x = 0; x <= 1316; x += 1) {
    const d = dipAt(x);
    const rough = d < 2 ? 5 : 15;
    const up = Math.max(0.1, 17.5 - Math.max(0, d + (noise(x + seed) - 0.5) * rough) / 3);
    const dn = Math.max(0.1, 17.5 - Math.max(0, d + (noise(x * 3 + seed) - 0.5) * rough) / 3);
    top.push(`${x},${(center - up).toFixed(1)}`);
    bottom.unshift(`${x},${(center + dn).toFixed(1)}`);
  }
  return [...top, ...bottom].join(" ");
};

const Waveform = () => (
  <svg width="100%" height="77" viewBox="0 0 1316 77" preserveAspectRatio="none" aria-hidden>
    <defs>
      <linearGradient id="wa" x1="0" y1="0" x2="0" y2="1"><stop offset="0" stopColor="#66a05c" /><stop offset="1" stopColor="#3f8532" /></linearGradient>
      <linearGradient id="wb" x1="0" y1="0" x2="0" y2="1"><stop offset="0" stopColor="#32802a" /><stop offset="1" stopColor="#226a16" /></linearGradient>
    </defs>
    <polygon points={wave(20.5, 1)} fill="url(#wa)" stroke="#3d5f38" strokeWidth="0.6" />
    <polygon points={wave(57.5, 7)} fill="url(#wb)" stroke="#123f0c" strokeWidth="0.8" />
  </svg>
);

const AutomationCurve = () => (
  <svg width="100%" height="100" viewBox="0 0 1316 100" preserveAspectRatio="none" aria-hidden>
    <path d="M0 47H712V69H819.500V47H1316" fill="none" stroke="#b4b544" strokeWidth="2" />
    {[[712, 47], [712, 69], [819.5, 69], [819.5, 47]].map(([x, y]) => (
      <rect key={`${x}${y}`} x={x - 2.5} y={y - 2.5} width="5" height="5" fill="#fdfde0" />
    ))}
  </svg>
);

/* ---------- parts ---------- */

const TrackRow = ({ t }: { t: TrackData }) => (
  <>
    <Row $h={t.h ?? 41}>
      <Strip $c={t.color}><Icon name={t.n === 1 ? "audio" : "keys"} size={13} w={11} />{t.n}</Strip>
      <Body>
        <Pair><Cap $on={t.mute ? "m" : undefined}>m</Cap><Cap $on={t.solo ? "s" : undefined}>S</Cap></Pair>
        <TrackName>{t.name}</TrackName>
        <Sets>
          <Pair $w={45}><Cap $on={t.rec ? "s" : undefined} aria-label="录音"><Icon name="rec" size={12} /></Cap><Cap aria-label="监听"><Icon name="mon" size={10} /></Cap></Pair>
          <Pair $w={45}><Cap aria-label="编辑"><Icon name="edit" size={11} /></Cap><Cap aria-label="乐器"><Icon name={t.n === 1 ? "stereo" : "keys"} size={t.n === 1 ? 12 : 9} w={t.n === 1 ? 12 : 11} /></Cap></Pair>
          <Pair $w={45}><Cap $on={t.read ? "r" : undefined}>R</Cap><Cap>W</Cap></Pair>
        </Sets>
      </Body>
      <RowMeter>
        {t.levels?.map((h, i) => (
          <MeterCol key={i} $w={3} $top={t.peak ?? 0}><Peak $warm={t.n === 3 && i === 0} /><Level $h={h} /></MeterCol>
        ))}
      </RowMeter>
    </Row>
    {t.auto && (
      <Row $h={t.auto.h}>
        <Strip $c={t.color} $sub />
        <Body $sub $selected={t.auto.selected}>
          <Pair $lit={t.auto.selected}><Cap $on="r">R</Cap><Cap $lit={t.auto.selected}>W</Cap></Pair>
          <ParamLine>
            <Param $lit={t.auto.selected}>{t.auto.param}</Param>
            <Value $lit={t.auto.selected} defaultValue={t.auto.value} aria-label={`${t.auto.param} 值`} />
          </ParamLine>
          {t.auto.more && <Pair $w={21} $lit={t.auto.selected}><Cap $lit={t.auto.selected} aria-label="锁定"><Icon name="bars" size={9} /></Cap></Pair>}
        </Body>
        <RowMeter />
      </Row>
    )}
  </>
);

const clips: Record<string, React.ReactNode> = {
  audio: <Clip $tone="audio"><Waveform /></Clip>,
  blue: <Clip $tone="blue"><Notes phrases={melody} ink="#2f74a6" height={38} /></Clip>,
  teal: <Clip $tone="teal"><Notes phrases={piano} ink="#2a7c84" height={38} /></Clip>,
  lime: <Clip $tone="lime" $part={86.8}><Notes phrases={violin} ink="#96a336" height={38} width={1143} /></Clip>,
};

const TransportBar = () => (
  <Transport aria-label="走带">
    <Grip><Icon name="up" size={8} /></Grip>
    <LoadMeter $w={26}><Load /></LoadMeter>
    <Screen $w={132}>
      <ModeRow><Icon name="rec" size={9} /><span>穿入/穿出</span></ModeRow>
      <ModeRow $gap><Icon name="tee" size={8} /><span>从光标处开始</span></ModeRow>
      <ModeRow><Icon name="flag" size={8} /><span>保留历史</span></ModeRow>
      <ModeRow><Icon name="lanes" size={8} /><span>新模块</span></ModeRow>
    </Screen>
    <Screen $w={113}>
      <LocRow><Key>L</Key><Push /><Digits>1.  1.  1.   0</Digits></LocRow>
      <LocRow><Key aria-label="穿入"><Icon name="curveDown" size={10} w={14} /></Key><Push /><Digits $dim>0.   0</Digits><Key aria-label="前卷"><Icon name="preroll" size={10} w={13} /></Key></LocRow>
      <LocRow><Key>R</Key><Push /><Digits>129.  1.  1.   0</Digits></LocRow>
      <LocRow><Key aria-label="穿出"><Icon name="curveUp" size={10} w={14} /></Key><Push /><Digits $dim>0.   0</Digits><Key aria-label="后卷"><Icon name="postroll" size={9} w={13} /></Key></LocRow>
    </Screen>
    <Stack $w={264}>
      <TimeScreen $w={264}>
        <Jog><Icon name="plus" size={8} /><Icon name="minus" size={5} w={8} /><JogBar /></Jog>
        <Digits $size={15}>31.  5.  1.  94</Digits>
        <NoteMarks><Icon name="quarter" size={14} /><Icon name="swing" size={16} w={10} /></NoteMarks>
        <Push />
        <Digits $dim>0:01:01.463</Digits>
        <NoteMarks><Icon name="clock" size={10} /></NoteMarks>
      </TimeScreen>
      <Deck>
        {[["prev", 17], ["next", 17], ["rew", 36], ["fwd", 36], ["cycle", 36], ["stop", 36], ["play", 36], ["rec", 36]].map(([n, g]) => (
          <DeckButton key={n} $grow={g as number} $tone={n === "play" ? "go" : "pale"} aria-label={n as string}>
            <Icon name={n as string} size={n === "cycle" || n === "rew" || n === "fwd" ? 16 : 11} />
          </DeckButton>
        ))}
      </Deck>
    </Stack>
    <Stack $w={113}>
      <MarkerScreen $w={113}><MarkerRow><Icon name="down" size={6} /></MarkerRow><Icon name="down" size={6} /></MarkerScreen>
      <Deck $quiet>
        {[["ins", 17], ["del", 17], ["nudgeL", 17], ["nudgeR", 17], ["loopback", 33]].map(([n, g]) => (
          <DeckButton key={n} $grow={g as number} $tone="off" disabled aria-label={n as string}><Icon name={n as string} size={12} w={n === "loopback" ? 18 : undefined} /></DeckButton>
        ))}
      </Deck>
    </Stack>
    <Screen $w={112}>
      <TempoRow><Key $w={33}>CLICK</Key>OFF<Push /><Key aria-label="节拍器"><Icon name="metro" size={10} w={15} /></Key></TempoRow>
      <TempoRow><Key $w={33}>TEMPO</Key>FIXED<Push /><Digits $dim $size={11}>6/8</Digits></TempoRow>
      <TempoRow><Push /><Digits $size={11}>90.000</Digits></TempoRow>
      <TempoRow><Key $w={33}>SYNC</Key>INT.<Push /><Digits $dim $size={10}>离线</Digits></TempoRow>
    </Screen>
    <Screen $w={15} />
    <OutMeter $w={40}>
      <MeterCol $w={6} $top={26}><Peak /><Level $bright $h={1} /></MeterCol>
      <Push />
      <MeterCol $w={6} $top={21}><Peak /><Level $bright $h={19} /></MeterCol>
      <MeterCol $w={6} $top={21}><Peak /><Level $bright $h={16} /></MeterCol>
    </OutMeter>
    <VRange $h={54} aria-label="输出电平" defaultValue={56} />
    <Grip><Icon name="up" size={8} /></Grip>
  </Transport>
);

const tools = ["pointer", "range", "split", "glue", "erase", "zoom", "mute", "pencil", "line", "speaker", "bucket"];
const menus = ["文件(F)", "编辑(E)", "工程(P)", "音频(A)", "MIDI(M)", "媒体(D)", "走带(T)", "设备(V)", "窗口(W)", "帮助(H)", "Steinberg Hub(S)"];

const App = () => (
  <Page>
    <Global />
    <Frame>
      <MenuBar>
        <Logo><Icon name="logo" size={16} /></Logo>
        <Menu>{menus.map((m) => <MenuItem key={m}>{m}</MenuItem>)}</Menu>
        <WinTitle>Cubase Elements 工程 - 훨릴리D-Eb扒带课程</WinTitle>
        <WinButtons>
          {["winMin", "winMax", "winClose"].map((n) => <button key={n} aria-label={n}><Icon name={n} size={11} /></button>)}
        </WinButtons>
      </MenuBar>

      <Toolbar>
        <Group>
          <ToolButton $w={14} $tone="light" $ink="#0c0d0f" aria-label="激活工程"><Icon name="power" size={12} /></ToolButton>
          <ToolButton $w={22} $ink="#0c0d0f" aria-label="窗口布局"><Icon name="layout" size={14} /></ToolButton>
        </Group>
        <Group><ToolButton aria-label="延迟补偿"><Icon name="constrain" size={16} /></ToolButton></Group>
        <Group>
          <ToolButton $tone="yellow">M</ToolButton><ToolButton $tone="red">S</ToolButton>
          <ToolButton $tone="green">R</ToolButton><ToolButton $tone="dark">W</ToolButton>
        </Group>
        <Group>
          <ToolButton $tone="light" $ink="#0c0d0f" aria-label="自动滚动"><Icon name="follow" size={17} /></ToolButton>
          <ToolButton $w={10} $tone="light" aria-label="暂停滚动"><Icon name="star" size={11} /></ToolButton>
        </Group>
        <Group $framed>
          <ToolButton $w={18} $tone="steel" aria-label="上一标记"><Icon name="prev" size={11} /></ToolButton>
          <ToolButton $w={17} $tone="steel" aria-label="下一标记"><Icon name="next" size={11} /></ToolButton>
          <ToolButton $w={35} $tone="steel" aria-label="循环"><Icon name="cycle" size={16} /></ToolButton>
          <ToolButton $w={35} $tone="steel" aria-label="停止"><Icon name="stop" size={11} /></ToolButton>
          <ToolButton $w={35} $tone="go" aria-label="播放"><Icon name="play" size={11} /></ToolButton>
          <ToolButton $w={35} $tone="steel" aria-label="录音"><Icon name="rec" size={12} /></ToolButton>
        </Group>
        <Tools>
          {tools.map((n, i) => (
            <ToolButton key={n} $tone={i ? "plain" : "light"} $ink={i === 0 ? "#000" : "#3a3c40"} aria-label={n}><Icon name={n} size={16} /></ToolButton>
          ))}
          <ToolHint><Icon name="down" size={8} /></ToolHint>
        </Tools>
        <Group><ToolButton $tone="dark" aria-label="交叉淡化"><Icon name="xfade" size={16} /></ToolButton></Group>
        <Group>
          <ToolButton $tone="light" $ink="#0c0d0f" aria-label="吸附"><Icon name="snap" size={14} /></ToolButton>
          <ToolButton aria-label="网格"><Icon name="grid" size={13} /></ToolButton>
          <ToolButton $ink="#777a7f" aria-label="网格类型"><Icon name="gridtype" size={14} /></ToolButton>
          <ToolButton $ink="#777a7f" aria-label="量化"><Icon name="quant" size={14} /></ToolButton>
        </Group>
      </Toolbar>
      <StatusLine>无选择对象</StatusLine>

      <Work>
        <Inspector>
          <PanelTitle>观测区</PanelTitle>
          <Section $gap={0}>
            <SectionPart $w={23} $end>6</SectionPart>
            <SectionPart $lime>小提琴solo<Push /><Icon name="right" size={7} /></SectionPart>
            <SectionPart $w={22} aria-label="编辑通道"><Icon name="edit" size={14} /></SectionPart>
          </Section>
          <Card>
            <Controls>
              <ControlBox><Cap $lit>m</Cap><Cap $on="s">S</Cap></ControlBox>
              <ControlBox><Cap $on="r" $w={22}>R</Cap><Cap $lit $w={24}>W</Cap></ControlBox>
              <Rounds>
                <Round $d={24} $red aria-label="录音启用"><Icon name="rec" size={16} /></Round>
                <Round $d={16} aria-label="监听"><Icon name="mon" size={10} /></Round>
              </Rounds>
              <ControlBox><Push /><Icon name="wheel" size={12} w={14} /></ControlBox>
            </Controls>
            <Faders>
              <FaderIcons><Icon name="volume" size={14} /><Icon name="pan" size={14} /><Icon name="delay" size={16} w={20} /></FaderIcons>
              <FaderScreen>
                <Fader>-3.03<HRange $fill={64} defaultValue={65} /></Fader>
                <Fader $mid>C<HRange defaultValue={49} /></Fader>
                <Fader>-50.00<HRange defaultValue={45} /></Fader>
              </FaderScreen>
            </Faders>
            <Slot $dim $gap={2}><Icon name="diamond" size={11} /><span>无轨道预置</span><Icon name="reload" size={11} /></Slot>
            <Slot><Icon name="input" size={11} /><span>All MIDI Inputs</span></Slot>
            <Slot $gap={0}><Icon name="output" size={11} /><span>Kontakt 5</span><Icon name="output" size={10} /></Slot>
            <Channel><Icon name="dots" size={9} /><Digits $size={10}>1</Digits><Icon name="diamond" size={11} /><ChannelOut><Icon name="arrow" size={10} /><Icon name="keys" size={11} /></ChannelOut></Channel>
            <Slot><Icon name="sheet" size={11} /></Slot>
            <Slot $dim><Icon name="drum" size={11} /><span>无鼓映射</span></Slot>
          </Card>
          <Section><SectionPart $size={10}>和弦</SectionPart><SectionPart $w={22} $light aria-label="和弦设置"><Icon name="chord" size={12} /></SectionPart></Section>
          <Section><SectionPart>MIDI 调节器</SectionPart><SectionPart $w={22} $light aria-label="旁通"><Icon name="midi" size={14} /></SectionPart></Section>
          <Section>
            <SectionPart $w={23} aria-label="通道" />
            <SectionPart $lime>小提琴solo<Push /><Lime><Icon name="keys" size={11} w={10} /></Lime><Icon name="right" size={7} /></SectionPart>
            <SectionPart $w={22} aria-label="编辑乐器"><Icon name="edit" size={14} /></SectionPart>
          </Section>
          <Section><SectionPart>记事本</SectionPart><SectionPart $w={22} $light aria-label="记事"><Icon name="note" size={11} /></SectionPart></Section>
          <PanelFoot><Icon name="gear" size={10} /></PanelFoot>
        </Inspector>

        <TrackPanel>
          <TrackHead><Icon name="plus" size={10} /></TrackHead>
          {tracks.map((t) => <TrackRow key={t.n} t={t} />)}
          <NextRow><Swatch $c="#1c2126" /><Swatch $c="#a055ea" /><Swatch $c="#2a3137" /><Swatch $c="#000" /></NextRow>
          <PanelFoot><FootMark><Icon name="minus" size={5} /></FootMark><Icon name="down" size={10} /><Icon name="gear" size={11} /></PanelFoot>
        </TrackPanel>

        <Arrange>
          <RulerRow>
            <Ruler>
              <Bar $span={134} />
              {bars.map((b) => <Bar key={b} $span={b === 37 ? 121 : 215}>{b}</Bar>)}
            </Ruler>
            <RulerMenu><RulerMenuButton aria-label="标尺格式"><Icon name="down" size={9} /></RulerMenuButton></RulerMenu>
          </RulerRow>
          <Field>
            <Canvas>
              <GridLines>
                <GridCell $span={134} />
                {bars.map((b) => <GridCell key={b} $span={b === 37 ? 133 : 215} />)}
              </GridLines>
              {tracks.map((t) => (
                <React.Fragment key={t.n}>
                  <Lane $h={t.h ?? 41}>{t.clip && clips[t.clip]}</Lane>
                  {t.auto && <Lane $h={t.auto.h}>{t.auto.selected ? <AutomationCurve /> : <FlatLine $top={t.auto.line ?? 0} />}</Lane>}
                </React.Fragment>
              ))}
              <Playhead />
              <OverlayMark width="200" height="100" viewBox="0 0 200 100" aria-hidden>
                <ellipse cx="100" cy="50" rx="97" ry="46" fill="none" stroke="#fb3638" strokeWidth="3" />
              </OverlayMark>
              <MouseArrow width="12" height="20" viewBox="0 0 12 20" aria-hidden>
                <path d="M1 1v15l3.500-3.300L7 18.500l2.500-1-2.500-5.500h4.500z" fill="#fff" stroke="#222" strokeWidth="1" />
              </MouseArrow>
            </Canvas>
            <VBar>
              <Icon name="line" size={10} />
              <Gap $h={8} /><Track $grow={40} /><Knob /><Gap $h={15} /><Knob />
              <Gap $h={4} /><Track $grow={482} $thick />
              <Track $grow={188} /><Knob />
              <Gap $h={9} /><Icon name="down" size={8} /><Gap $h={4} /><Icon name="minus" size={6} /><Gap $h={3} />
              <VRange $h={56} aria-label="垂直缩放" defaultValue={22} />
              <Gap $h={2} /><Icon name="plus" size={6} />
            </VBar>
          </Field>
          <HBar>
            <Knob /><HTrack $grow={102} /><HTrack $grow={47} $thick /><HTrack $grow={1050} /><Knob />
            <HZoom><Icon name="down" size={8} /><Icon name="minus" size={6} /><HRange $round defaultValue={41} aria-label="水平缩放" /><Icon name="plus" size={6} /></HZoom>
          </HBar>
        </Arrange>
      </Work>
      <SideTab><SideLevel /></SideTab>
      <TransportBar />
    </Frame>
    <Progress />
    <ProgressDone />
  </Page>
);

export default App;
